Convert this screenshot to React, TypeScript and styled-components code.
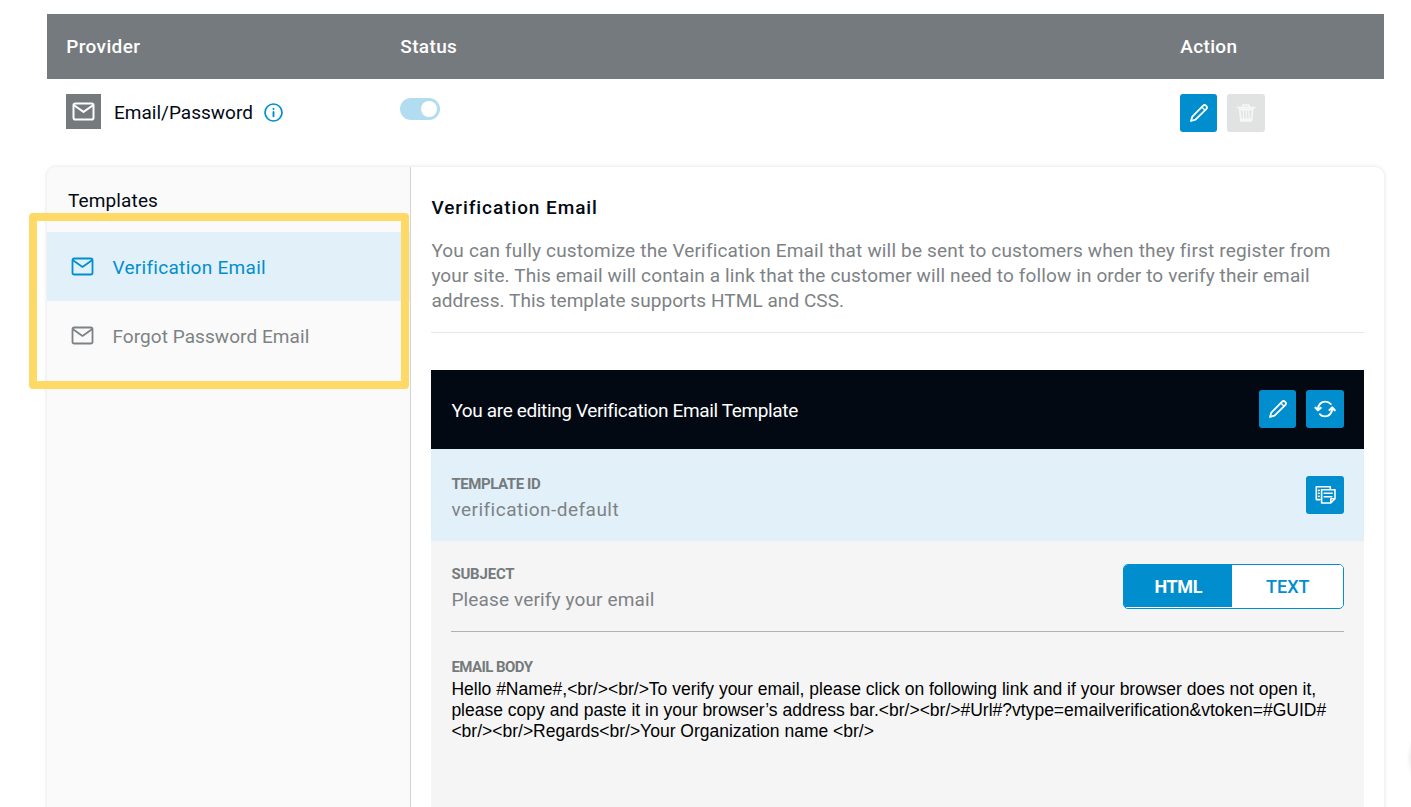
import React from 'react';
import styled, { createGlobalStyle } from 'styled-components';

const GlobalStyle = createGlobalStyle`
  *, *::before, *::after { box-sizing: border-box; }
  body {
    margin: 0;
    background: #fff;
    color: #020912;
    font-family: Roboto, "Liberation Sans", sans-serif;
    font-size: 19px;
  }
  h2, h3, p { margin: 0; font-weight: inherit; font-size: inherit; }
`;

const blue = '#008ecf';
const grey = '#757a7d';
const softGrey = '#7d8285';
const paleBlue = '#e2f1f9';

const Page = styled.main`
  position: relative;
  display: flex;
  flex-direction: column;
  height: 807px;
  padding: 14px 26.7px 0 47px;
  overflow: hidden;
`;

const Text = styled.span<{ $spacing?: number }>`
  letter-spacing: ${(p) => p.$spacing ?? 0}px;
  white-space: nowrap;
`;

const TableRow = styled.div`
  display: grid;
  grid-template-columns: 334px 780px 1fr;
  padding-left: 19.3px;
`;

const TableHead = styled(TableRow)`
  align-items: center;
  height: 65px;
  padding-bottom: 1px;
  background: #757a7e;
  color: #fff;
  font-weight: 500;
`;

const ProviderRow = styled(TableRow)`
  align-items: start;
  height: 88px;
  padding-top: 15px;
`;

const Provider = styled.div`
  display: flex;
  align-items: center;
  height: 35px;
  > span:nth-child(2) { padding-top: 1px; }
`;

const ProviderIcon = styled.span`
  display: grid;
  place-items: center;
  width: 35px;
  height: 35px;
  margin-right: 12.6px;
  background: ${grey};
  color: #fff;
`;

const InfoIcon = styled.svg`
  width: 19px;
  height: 19px;
  margin: 2px 0 0 11px;
  color: ${blue};
`;

const Toggle = styled.span`
  display: flex;
  justify-content: flex-end;
  width: 40px;
  height: 22px;
  margin-top: 4px;
  padding: 3px;
  border-radius: 11px;
  background: #b2ddf1;
  &::after {
    content: '';
    width: 16px;
    height: 16px;
    border-radius: 50%;
    background: #fff;
  }
`;

const Buttons = styled.div`
  display: flex;
  gap: 10px;
`;

const IconButton = styled.button<{ $muted?: boolean; $narrow?: boolean }>`
  display: grid;
  place-items: center;
  width: ${(p) => (p.$narrow ? 37 : 38)}px;
  height: 38px;
  padding: 0;
  border: 0;
  border-radius: 3px;
  background: ${(p) => (p.$muted ? '#e1e2e2' : blue)};
  color: ${(p) => (p.$muted ? '#f6f7f7' : '#fff')};
`;

const Card = styled.section`
  display: flex;
  flex: 1;
  margin-bottom: -20px;
  border-radius: 9px;
  background: #fff;
  box-shadow: 0 0 4px rgba(0, 0, 0, 0.13);
`;

const Sidebar = styled.aside`
  width: 364px;
  padding-top: 23px;
  border-right: 1px solid #d2d3d4;
  border-radius: 9px 0 0 0;
  background: #fafafa;
`;

const SidebarTitle = styled.h2`
  height: 42px;
  padding-left: 21px;
  line-height: 22px;
`;

const NavItem = styled.div<{ $active?: boolean }>`
  display: flex;
  align-items: center;
  gap: 18.4px;
  height: 69px;
  padding-left: 24px;
  color: ${(p) => (p.$active ? blue : softGrey)};
  background: ${(p) => (p.$active ? paleBlue : 'transparent')};
  svg { margin-bottom: 1px; }
  span { padding-top: 1px; }
`;

const Content = styled.div`
  display: flex;
  flex: 1;
  flex-direction: column;
  padding: 29px 20px 0 20.4px;
`;

const Title = styled.h2`
  line-height: 24px;
  font-weight: 500;
`;

const Description = styled.p`
  display: flex;
  flex-direction: column;
  height: 95px;
  margin: 18px 0 37px;
  border-bottom: 1px solid #e6e7e8;
  color: ${softGrey};
  font-weight: 400;
  line-height: 25px;
`;

const Editor = styled.section`
  display: flex;
  flex: 1;
  flex-direction: column;
  background: #f5f5f5;
`;

const EditorBar = styled.header`
  display: flex;
  align-items: center;
  justify-content: space-between;
  height: 79px;
  padding: 0 20px 1px;
  background: #020912;
  color: #fff;
  > span { padding-top: 3px; }
`;

const IdRow = styled.div`
  display: flex;
  align-items: center;
  justify-content: space-between;
  height: 92px;
  padding: 0 20px;
  background: ${paleBlue};
`;

const SubjectRow = styled.div`
  display: flex;
  align-items: center;
  justify-content: space-between;
  height: 91px;
  margin: 0 20px;
  border-bottom: 1px solid #b0b2b4;
`;

const Field = styled.div<{ $drop: number }>`
  display: flex;
  flex-direction: column;
  gap: 4px;
  padding-top: ${(p) => p.$drop}px;
  color: ${softGrey};
  line-height: 22px;
`;

const Label = styled.h3<{ $spacing: number }>`
  font-size: 15px;
  font-weight: 700;
  line-height: 22px;
  letter-spacing: ${(p) => p.$spacing}px;
  color: ${grey};
`;

const Segmented = styled.div`
  display: flex;
  width: 221px;
  height: 45px;
  border: 1px solid ${blue};
  border-radius: 5px;
  background: #fff;
  overflow: hidden;
`;

const Segment = styled.button<{ $active?: boolean }>`
  display: grid;
  place-items: center;
  width: ${(p) => (p.$active ? 108 : 111)}px;
  height: 42px;
  padding: 2px 0 0;
  border: 0;
  background: ${(p) => (p.$active ? blue : '#fff')};
  color: ${(p) => (p.$active ? '#fff' : blue)};
  font: ${(p) => (p.$active ? 700 : 500)} 18px Roboto, sans-serif;
`;

const Body = styled.div`
  padding: 24px 20px 0;
`;

const Code = styled.p`
  display: flex;
  flex-direction: column;
  padding-top: 1px;
  color: #000;
  font-family: "Liberation Sans", Arial, sans-serif;
  font-size: 17.5px;
  line-height: 21px;
  white-space: nowrap;
`;

const Highlight = styled.div`
  position: absolute;
  left: 29px;
  top: 213px;
  width: 380px;
  height: 176px;
  border: 8px solid #ffd966;
  border-radius: 4px;
`;

const Launcher = styled.div`
  position: absolute;
  left: 1412px;
  top: 727px;
  width: 60px;
  height: 60px;
  border-radius: 50%;
  box-shadow: 0 1px 6px rgba(0, 0, 0, 0.2);
`;

const stroke = {
  fill: 'none',
  stroke: 'currentColor',
  strokeLinecap: 'round' as const,
  strokeLinejoin: 'round' as const,
};

const Mail = ({ weight = 1.8 }: { weight?: number }) => (
  <svg width="23" height="19" viewBox="0 0 23 19" {...stroke} strokeWidth={weight}>
    <rect x="1.5" y="1.5" width="20" height="16" rx="1.8" />
    <path d="M2 3.3 11.5 9.9 21 3.3" />
  </svg>
);

const Pencil = () => (
  <svg width="20" height="20" viewBox="0 0 20 20" {...stroke} strokeWidth="1.8">
    <path d="M2 18 3.3 13.6 13.9 2.9C15 1.8 16.1 1.8 17.2 2.8S18.3 5 17.2 6.1L6.5 16.7Z" />
    <path d="M12.8 4 16.1 7.3" strokeWidth="1.3" />
  </svg>
);

const Trash = () => (
  <svg width="20" height="20" viewBox="0 0 20 20" {...stroke} strokeWidth="1.7">
    <path d="M1.6 4.6H18.8M6.5 4.5 7.2 2H12.8L13.5 4.5M3.6 5.2 4.9 17.8H15.5L16.8 5.2M4 6.6H16M4.8 16.4H15.5" />
    <path d="M7.4 7.5V16M10.2 7.5V16M13 7.5V16" strokeWidth="1.3" />
  </svg>
);

const Refresh = () => (
  <svg width="22" height="20" viewBox="0 0 22 20" {...stroke} strokeWidth="1.9">
    <path d="M4 10.2C4 5.8 7.2 2.6 11.2 2.6 13.5 2.6 15.5 3.5 16.8 5.1" />
    <path d="M18.2 9.8C18.2 14.2 15 17.4 11 17.4 8.7 17.4 6.9 16.6 5.8 15.2" />
    <path d="M1.6 8.7 4 11.2 6.6 8.9M15.6 11 18.2 8.5 20.7 11.3" strokeWidth="2.2" />
  </svg>
);

const Notes = () => (
  <svg width="22" height="20" viewBox="0 0 22 20" {...stroke} strokeWidth="1.6">
    <path d="M16.3 3.6V1.7H2.3V14.6H6M4.6 5.4H5.2M4.6 8.2H5.2M4.6 11.2H5.2" />
    <path d="M7.6 4.8H21V13.8L16.8 18H7.6ZM16.8 18V13.8H21M10.2 8.2H18.2M10.2 11.7H17.8" />
  </svg>
);

export default function App() {
  return (
    <>
      <GlobalStyle />
      <Page>
        <TableHead>
          <Text $spacing={0.36}>Provider</Text>
          <Text $spacing={0.37}>Status</Text>
          <Text $spacing={0.33}>Action</Text>
        </TableHead>
        <ProviderRow>
          <Provider>
            <ProviderIcon><Mail weight={2} /></ProviderIcon>
            <Text $spacing={0.02}>Email/Password</Text>
            <InfoIcon viewBox="0 0 19 19" {...stroke}>
              <circle cx="9.5" cy="9.5" r="8.5" strokeWidth="1.7" />
              <path d="M9.5 9V13.2M9.5 5.7V6" strokeWidth="1.9" />
            </InfoIcon>
          </Provider>
          <Toggle />
          <Buttons>
            <IconButton $narrow aria-label="Edit provider"><Pencil /></IconButton>
            <IconButton $muted aria-label="Delete provider"><Trash /></IconButton>
          </Buttons>
        </ProviderRow>
        <Card>
          <Sidebar>
            <SidebarTitle><Text $spacing={0.13}>Templates</Text></SidebarTitle>
            <NavItem $active><Mail /><Text $spacing={0.3}>Verification Email</Text></NavItem>
            <NavItem><Mail /><Text $spacing={0.07}>Forgot Password Email</Text></NavItem>
          </Sidebar>
          <Content>
            <Title><Text $spacing={0.93}>Verification Email</Text></Title>
            <Description>
              <Text $spacing={0.17}>You can fully customize the Verification Email that will be sent to customers when they first register from</Text>
              <Text $spacing={0.13}>your site. This email will contain a link that the customer will need to follow in order to verify their email</Text>
              <Text $spacing={0.06}>address. This template supports HTML and CSS.</Text>
            </Description>
            <Editor>
              <EditorBar>
                <Text $spacing={-0.36}>You are editing Verification Email Template</Text>
                <Buttons>
                  <IconButton $narrow aria-label="Edit template"><Pencil /></IconButton>
                  <IconButton aria-label="Reset template"><Refresh /></IconButton>
                </Buttons>
              </EditorBar>
              <IdRow>
                <Field $drop={4}>
                  <Label $spacing={-0.43}>TEMPLATE ID</Label>
                  <Text $spacing={0.48}>verification-default</Text>
                </Field>
                <IconButton aria-label="Copy template"><Notes /></IconButton>
              </IdRow>
              <SubjectRow>
                <Field $drop={2}>
                  <Label $spacing={-0.2}>SUBJECT</Label>
                  <Text $spacing={0.14}>Please verify your email</Text>
                </Field>
                <Segmented>
                  <Segment $active><Text $spacing={-0.4}>HTML</Text></Segment>
                  <Segment><Text>TEXT</Text></Segment>
                </Segmented>
              </SubjectRow>
              <Body>
                <Label $spacing={-0.56}>EMAIL BODY</Label>
                <Code>
                  <span>{'Hello #Name#,<br/><br/>To verify your email, please click on following link and if your browser does not open it,'}</span>
                  <span>{'please copy and paste it in your browser’s address bar.<br/><br/>#Url#?vtype=emailverification&vtoken=#GUID#'}</span>
                  <span>{'<br/><br/>Regards<br/>Your Organization name <br/>'}</span>
                </Code>
              </Body>
            </Editor>
          </Content>
        </Card>
        <Highlight />
        <Launcher />
      </Page>
    </>
  );
}
